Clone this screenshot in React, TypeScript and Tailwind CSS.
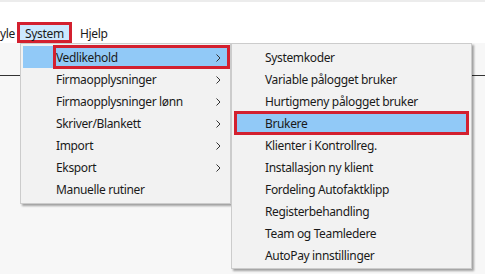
import React from "react";

const font = { fontFamily: '"Noto Sans", "Open Sans", Arial, sans-serif' };

function Chevron() {
  return (
    <svg width="5" height="8" viewBox="0 0 5 8" className="block">
      <polyline points="0.5,0.5 4,4 0.5,7.5" fill="none" stroke="#333" strokeWidth="1" />
    </svg>
  );
}

const mainItems: { label: string; sub: boolean }[] = [
  { label: "Vedlikehold", sub: true },
  { label: "Firmaopplysninger", sub: true },
  { label: "Firmaopplysninger lønn", sub: true },
  { label: "Skriver/Blankett", sub: true },
  { label: "Import", sub: true },
  { label: "Eksport", sub: true },
  { label: "Manuelle rutiner", sub: false },
];

const subItems = [
  "Systemkoder",
  "Variable pålogget bruker",
  "Hurtigmeny pålogget bruker",
  "Brukere",
  "Klienter i Kontrollreg.",
  "Installasjon ny klient",
  "Fordeling Autofaktklipp",
  "Registerbehandling",
  "Team og Teamledere",
  "AutoPay innstillinger",
];

export default function App() {
  return (
    <div className="relative w-[485px] h-[274px] overflow-hidden bg-white text-[12px] tracking-[-0.35px] text-[#1a1a1a]" style={font}>
      <div className="h-[2px] bg-[#ececec]" />
      <div className="flex items-center h-[41px] pt-[20px]">
        <div className="pl-0 pr-[8px] leading-[21px] pt-[2px]">yle</div>
        <div className="h-[21px] w-[55px] border-[3px] border-[#d3202f] bg-[#cce8ff] flex items-center justify-center leading-none ml-[-6px] pt-[2px]">
          System
        </div>
        <div className="pl-[8px] leading-[21px] pt-[2px]">Hjelp</div>
      </div>
      <div className="h-[32px] bg-[#f7f7f7]" />
      <div className="h-[1px] bg-[#333]" />
      <div className="h-[200px] bg-[#f7f7f7]" />

      {/* main menu */}
      <div className="absolute left-[20px] top-[43px] w-[211px] h-[161px] bg-[#f2f2f2] border border-[#cccccc] shadow-[2px_2px_2px_rgba(0,0,0,0.35)] py-[2px] pl-[2px] pr-[2px]">
        {mainItems.map((it, i) => (
          <div
            key={it.label}
            className={
              "relative flex items-center h-[22px] pt-[2px] " + (i === 0 ? "bg-[#91c9f7]" : "")
            }
          >
            {i === 0 && (
              <div className="absolute left-[30px] -right-[2px] top-[-1px] bottom-[-1px] border-[3px] border-[#d3202f]" />
            )}
            <span className="pl-[33px] flex-1">{it.label}</span>
            {it.sub && (
              <span className="pr-[7px]">
                <Chevron />
              </span>
            )}
          </div>
        ))}
      </div>

      {/* submenu */}
      <div className="absolute left-[231px] top-[43px] w-[241px] h-[226px] bg-[#f2f2f2] border border-[#cccccc] shadow-[2px_2px_2px_rgba(0,0,0,0.35)] py-[2px] px-[2px]">
        {subItems.map((s, i) => (
          <div
            key={s}
            className={"relative flex items-center h-[22px] pt-[2px] " + (i === 3 ? "bg-[#91c9f7]" : "")}
          >
            {i === 3 && (
              <div className="absolute -left-[0px] -right-[0px] top-[-1px] bottom-[-1px] border-[3px] border-[#d3202f]" />
            )}
            <span className="pl-[31px]">{s}</span>
          </div>
        ))}
      </div>
    </div>
  );
}
